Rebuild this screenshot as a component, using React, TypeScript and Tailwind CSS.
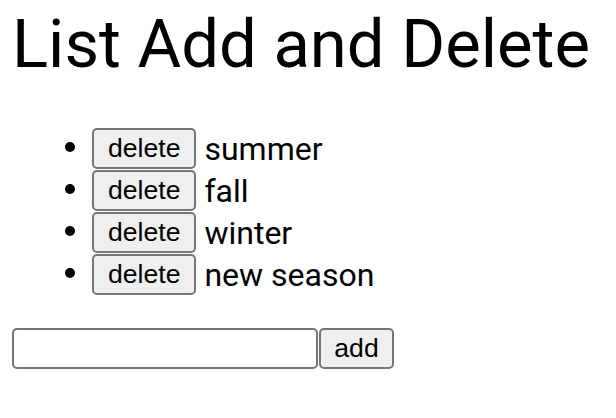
import { useState } from "react";

const App = () => {
  const [seasons, setSeasons] = useState(["summer", "fall", "winter", "new season"]);
  const [text, setText] = useState("");

  return (
    <div className="min-h-screen bg-white px-[12px] pt-[8px] text-black font-['Roboto',sans-serif]">
      <h1 className="text-[67px] leading-[72px] font-normal">List Add and Delete</h1>

      <ul className="mt-[45px] list-disc pl-[80px] text-[32px]">
        {seasons.map((s, i) => (
          <li key={i} className="h-[42px] leading-[42px]">
            <button
              onClick={() => setSeasons(seasons.filter((_, j) => j !== i))}
              className="h-[41px] align-middle rounded-[5px] border-2 border-[#767676] bg-[#efefef] px-[14px] text-[26.6px] leading-none font-['Liberation_Sans',Arial,sans-serif]"
            >
              delete
            </button>{" "}
            <span className="align-middle">{s}</span>
          </li>
        ))}
      </ul>

      <div className="mt-[35px] flex">
        <input
          value={text}
          onChange={(e) => setText(e.target.value)}
          className="h-[41px] w-[306px] rounded-[5px] border-2 border-[#767676] bg-white px-1 text-[26.6px] outline-none"
        />
        <button
          onClick={() => {
            setSeasons([...seasons, text]);
            setText("");
          }}
          className="ml-[1px] h-[41px] w-[75px] rounded-[5px] border-2 border-[#767676] bg-[#efefef] text-[26.6px] leading-none font-['Liberation_Sans',Arial,sans-serif]"
        >
          add
        </button>
      </div>
    </div>
  );
};

export default App;
